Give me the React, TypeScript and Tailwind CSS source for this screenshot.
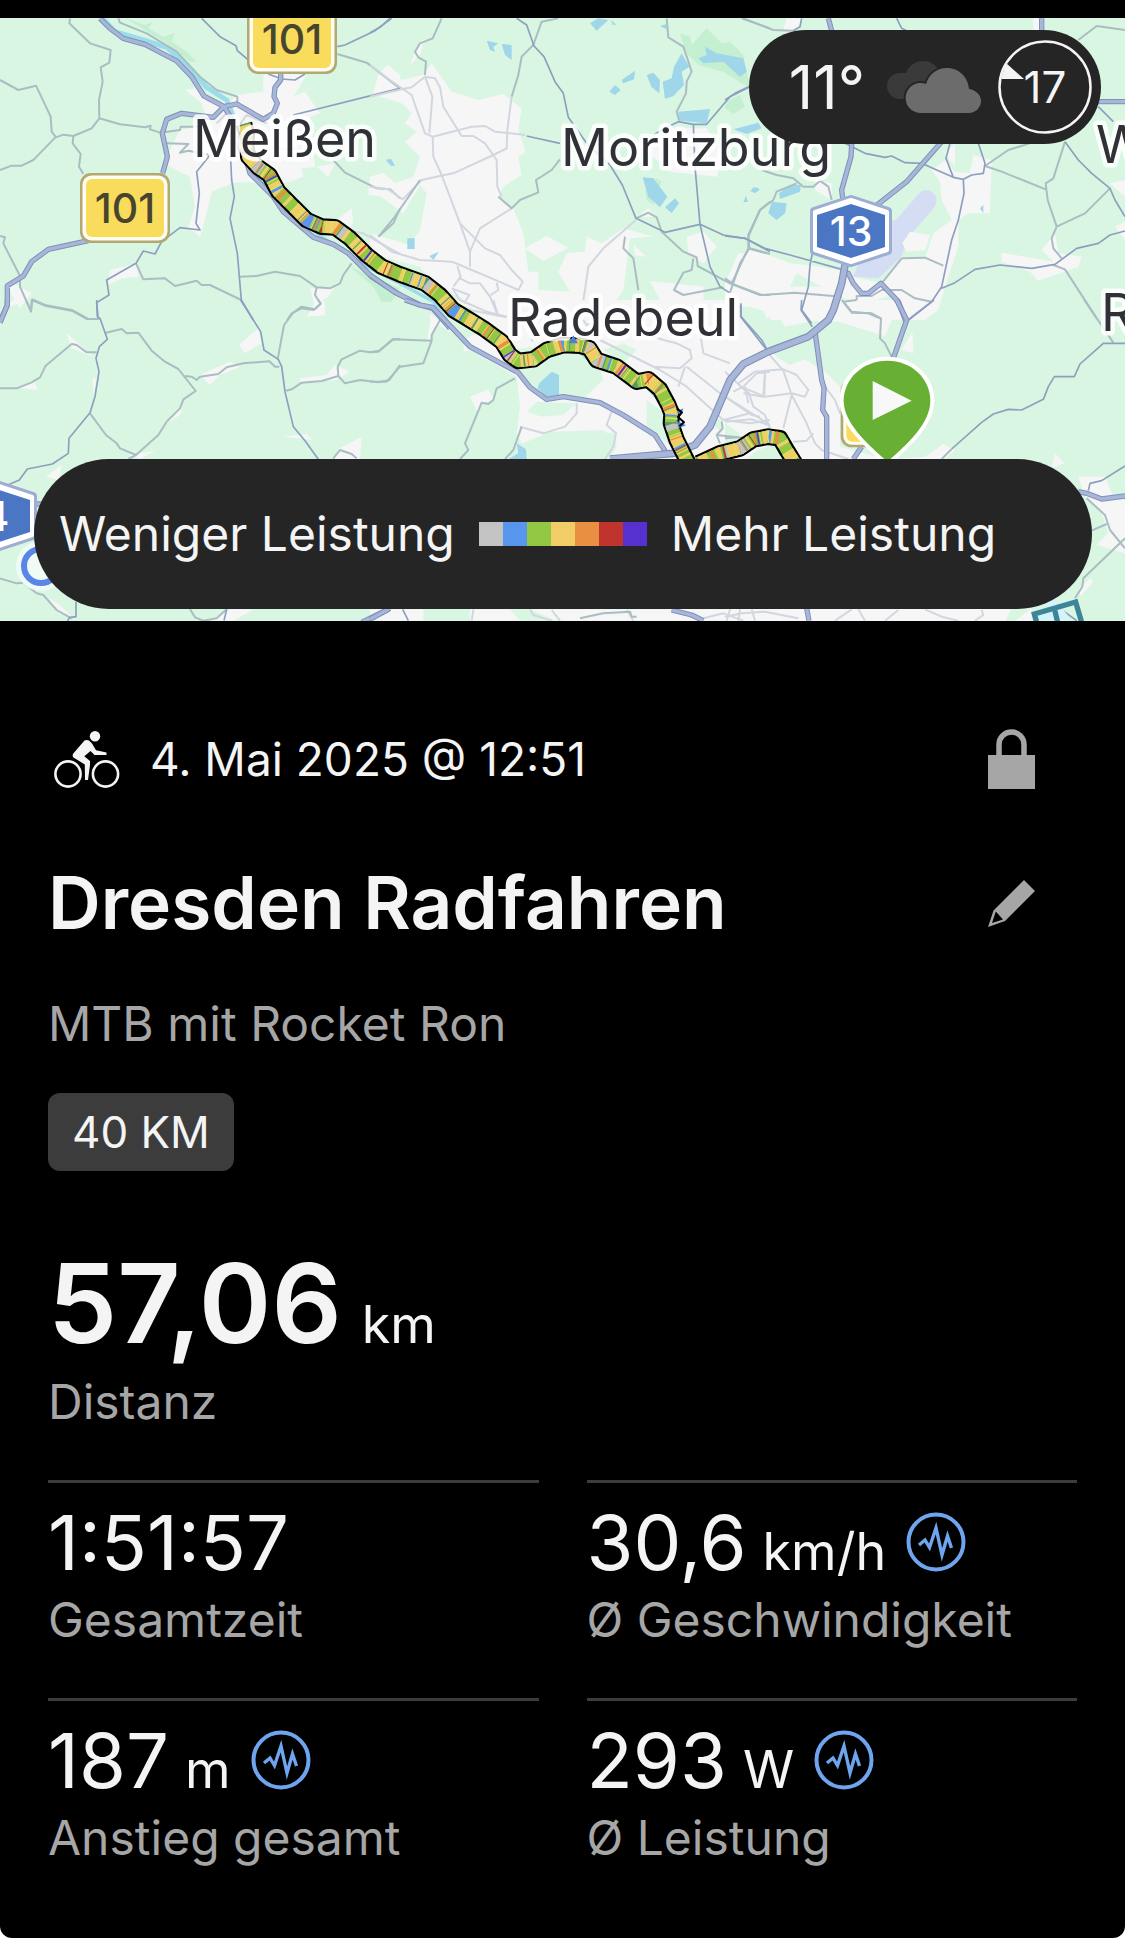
import type { ReactNode } from "react";

const LEGEND = [
  "bg-[#c3c3c3]",
  "bg-[#5796ec]",
  "bg-[#92c843]",
  "bg-[#f1cd66]",
  "bg-[#e98f41]",
  "bg-[#bf342d]",
  "bg-[#5731cf]",
];

/* Map geometry is split into six tiles, each drawn at three units per pixel. */
type TileData = {
  x: number;
  y: number;
  urban: string;
  green?: string;
  forest?: string;
  water?: string;
  gray: string;
  light?: string;
  minor: string;
  major: string;
};

const TILES: TileData[] = [
  {
    x: 0,
    y: 0,
    urban:
      "M555 270L605 262 620 305 690 305 712 285 790 275 790 225 845 220 920 225 880 290 915 275 960 340 930 350 945 500 905 505 910 530 870 545 800 560 750 545 700 548 635 575 620 640 600 712 565 680 585 620 570 530 500 495 510 450 540 390 625 375 605 310Z M1165 195L1200 225V300L1118 285 1135 225Z M950 500L1005 490 985 530Z M1110 530L1150 520 1200 560V625L1165 590 1105 585Z M330 810L410 790 415 830 365 835 325 855Z M40 850L95 880 60 925 20 860Z M1010 660L1055 625 1060 670 1030 700Z M930 865L1005 860 985 890 960 905 975 945 920 950 945 920Z M1120 705L1200 740V790L1160 750Z",
    forest:
      "M375 55L435 75 460 65 445 85 490 110 525 98 515 125 560 155 590 185 570 185 500 130Z M1050 800L1200 865 1175 905 1145 905 1120 860Z",
    water: "M1158 480l15-4 12 22-18-6z",
    gray: "M210 55L208 70 270 130 332 150 328 188 302 202 308 245 297 300 298 355 275 385 220 408 190 404 168 412 155 395 152 350 108 257 55 270 0 240 M168 410L110 470 100 480 65 497 35 497 0 510 M220 408L218 430 242 462 237 500 250 522 M298 355L360 373 435 382 452 377 450 388 480 398 540 390 542 380 600 380 M355 55L360 68 440 100 530 155 600 230 650 270 712 290 712 320 M500 430L565 432 540 458 565 452 630 465 M1012 162L1100 188 1200 265 M1000 480L1035 518 1130 565 1170 568 1200 595 M0 708L15 712 10 730 60 828 60 860 93 935 97 898 135 915 215 930 265 957 290 957 M408 790L430 838 495 835 525 858 590 842 605 855 630 855 724 900 M720 830L770 828 825 815 900 828 950 862 990 865 1020 850 1030 825 1055 790 M950 862L945 885 962 912 940 930 905 925 875 940 862 960 M1200 625L1180 670 1135 710",
    light: "M1035 690L1090 700 1160 740 1200 762 M700 400L740 345 800 370 M650 370L690 330 M800 445L930 448",
    minor:
      "M605 55L660 110 708 137 712 152 745 180 M1175 55L1125 92 1035 135 1012 140 M805 222L845 237 885 240 915 222 M880 345L1200 265 M630 465L590 515 598 580 588 670 600 690 540 683 485 725 465 762 430 753 408 790 320 840 327 885 290 908 295 960 M692 480L695 540 703 590 690 655 712 760 724 900 760 960",
    major:
      "M300 55L330 85 370 115 435 133 530 183 575 230 612 288 672 320 710 312 790 358 820 340 832 310 822 290 825 262 842 240V215 M672 320L640 352 545 340 500 358 487 400 502 470 488 520 M672 320L700 365 M735 470L750 520 820 590 850 635 940 712 1000 733 1045 760 1115 830 1200 885 M265 722L145 748 95 785 70 828 22 857 22 915 0 965",
  },
  {
    x: 370,
    y: 0,
    urban:
      "M15 285L30 220 50 195 95 240 160 225 185 190 245 275 325 300 400 282 455 325 445 390 467 455 445 470 455 525 400 560 385 590 430 625 460 700 475 815 505 815 505 870 600 875 565 815 590 760 645 755 650 710 695 730 760 685 850 710 780 715 760 870 700 960 380 960 180 840 150 800 0 760 0 700 120 735 150 690 170 580 150 555 100 640 0 565 0 530 40 520 60 555 130 530 150 470 105 425 140 395 105 370 125 340 95 310Z M530 708L595 743 520 783 465 745Z M120 195L140 140 165 115 150 165Z M840 843L1000 860V900H870Z M955 760L950 710 1000 695 1040 740 1000 790Z M1110 790L1140 750 1200 760V900L1090 880Z M900 385L1010 385 1060 480 1040 530 900 515 800 430Z M800 650L835 625 860 652 830 650Z M790 735L830 770 795 765Z",
    forest:
      "M930 100L960 110 965 135 1010 85 1055 130 1080 125 1120 165 1140 265 1060 215 985 195 950 160Z M1070 305L1110 285 1125 320 1090 342 1065 325Z M825 570L830 600 850 615 855 600 875 545 860 535Z",
    water:
      "M685 55L715 60 680 92 660 70Z M722 60l18 14h-12z M350 122L385 130 370 140 375 155 360 150Z M395 132L425 135V180L405 165Z M795 212L792 238 760 250 755 240Z M735 255L752 270 735 285 718 275Z M830 225L850 218 870 240 868 280 845 262Z M935 160L958 200 935 215 942 255 910 288 885 297 878 245 905 235 912 200Z M985 175L1010 165 1005 140 1040 160 1120 175 1130 215 1110 230 1060 185 1000 190Z M925 335L1020 327 1010 370 930 362Z M1090 388L1165 368 1175 385 1130 402Z M818 532L850 535 892 590 870 622 835 590Z M915 595L927 610 905 640 885 622Z M1150 562l20 5-15 12-12-6z M1128 588l6 18h-14z M112 715h22v32h-22z M178 768L207 755 190 780Z M50 478L75 498 62 497Z M870 78l20-6-2 16z",
    gray: "M215 55L188 115 150 130 135 155 145 172 168 185 165 225 M565 55L515 65 490 135 455 170 445 225 425 290 M890 55L895 112 940 140 965 215 950 245 948 280 920 335 928 362 M1115 55L1200 85 M570 478L545 510 498 540 505 577 450 600 425 625 385 590 M798 655L835 638 860 652 875 695 940 755 980 772 983 798 1080 850 1170 885 1200 885 M970 775L965 810 940 818 912 870 940 885 1060 862 M1200 605L1170 630 1135 705 1138 745 1110 790 1080 878 M765 710L760 745 790 775 805 870 M75 650L30 705 M150 540L75 650 M1138 745L1200 762",
    light:
      "M0 195L60 240 125 285 165 400 188 410 190 470 215 525 270 670 300 755 300 800 M0 290L95 268 125 262 165 230 195 235 210 262 220 320 275 408 310 408 345 430 380 480 382 560 395 590 M165 230L187 290 178 400 M188 410L305 380 345 378 375 395 465 405 M425 290L412 390 410 445 370 465 255 518 155 540 98 598 55 568 0 560 M425 625L330 685 300 755 M0 705L65 755 150 780 245 785 270 795 400 850 445 870 458 845 425 810 390 765 345 745 270 670 M262 798L272 830 250 860 M245 865L298 885 282 910 M270 835L300 850 330 850 360 890 385 950 M380 848L385 870 362 885 M250 870L270 900 350 935 410 950 M798 660L700 745 655 800 645 870 640 900",
    minor:
      "M440 55L470 75 492 138 522 170 555 245 580 280 595 352 650 430 720 495 757 555 798 655 885 697 990 673 1060 705 1125 715 1200 755 M60 55L30 82 0 98 M470 408L570 430 M885 385L925 365 970 373 1010 373 1080 290 1140 260 M970 373L975 500 990 673 1020 800 1050 860 1078 878 M850 405L885 385",
    major: "M0 825L75 877 150 915 188 925 240 985",
  },
  {
    x: 725,
    y: 0,
    urban:
      "M185 55h45l-15 35h-40z M925 55h20v40h-20z M0 850L40 760 130 765 195 790 250 795 340 810 400 835 470 850 530 770 600 775 625 700 680 660 650 600 645 545 620 510 660 480 690 515 735 520 745 465 800 480 795 640 730 640 700 660 700 740 660 860 640 930 600 960H0Z M830 758L985 785 950 750 990 700 1000 760 1070 770 1060 800 940 842 915 815 830 785Z M1155 550L1200 540V590Z M270 540L320 550 320 600 270 570Z M1170 680L1200 665V720Z M660 460L690 430 690 500Z",
    green: "M195 860L215 820 290 860Z M330 890L380 900 400 960 320 930Z M440 905L500 885 530 940 490 960Z M480 765L530 770 490 820Z",
    water:
      "M162 580L195 555 228 555 225 575 165 597Z M140 605L185 610 180 640 155 660 130 640Z M765 625l10-10v25z M75 572l20-10 8 8-15 8z",
    gray: "M55 55L145 90 205 92 M930 425L850 450 780 498 830 515 962 568 M1020 425L985 535 962 550 968 600 995 680 980 715 985 745 1010 775 M1155 565L1080 640 995 680 M985 795L1020 808 1115 955 M1060 120L1115 78 1200 90 M320 600L310 560 285 542 265 560 235 560 205 535 155 525 110 510 M215 550L155 575 145 600 105 630 70 710 70 745 125 760 M70 745L20 850 M0 835L30 855 110 885 210 878 350 890 M395 900L395 888 440 888 470 870 530 870 570 895 620 905 M530 775L600 773 655 797 M530 775L470 850 M395 900L355 905 380 935 430 940 465 955",
    minor:
      "M230 55L225 80 205 92 M360 430L420 460 480 472 500 468 540 488 590 490 635 510 685 532 715 538 740 525 775 520 780 490 760 430 M675 430L663 475 685 532 M715 538L717 580 700 660 680 720 650 860 620 905 550 960 M650 865L690 848 750 808 825 795 920 805 990 793 1055 745 1120 730 1155 705 1200 693 M0 708L60 715 120 745 195 765 350 808 M262 760L255 795 250 860 230 930 260 970 M1020 425L1060 480 1100 520 1155 565 1170 600 1200 650 M1120 320L1165 365 M515 55L530 85 570 105 M0 300L30 280 75 258",
    major:
      "M310 55L322 100 M380 430L378 470 350 570 355 610 M650 425L545 545 450 620 M950 55V100 M1115 305H1200 M350 815L370 820 385 850 410 880 430 880 468 850 520 905 543 965",
  },
  {
    x: 0,
    y: 300,
    urban:
      "M200 100L235 130 280 172 215 145Z M45 262L105 245 112 270Z M185 495L175 540 138 530Z M775 85L783 130 735 160 717 135Z M600 225L690 185 720 200 660 225 630 255Z M1005 195L1048 215 1010 240 900 247V235L980 225Z M850 410L920 402 935 420Z M1085 410L1080 477H1000L1020 445Z M385 465L465 452 420 477Z M920 50L950 0 975 5 975 42Z M130 885L180 915 220 955 180 940Z M630 962L690 928H760L700 962Z M548 320L540 345 500 370Z M278 235l12 0-10 50z M0 30L90 0 40 0Z M1150 962L1200 928V962Z",
    gray: "M95 0L135 17 215 32 260 57 298 57 M78 0L93 33 95 0 M318 98L365 87 380 100 415 98 455 152 495 185 535 207 587 273 550 298 540 325 500 365 475 405 408 465 385 477 M408 465L360 445 350 430 318 405 270 340 M555 228L575 230 590 240 600 230 655 222 680 202 730 190 808 184 825 200 838 200 M833 178L852 75 880 38 905 20 945 28 962 10 955 0 M290 157L260 157 230 135 215 132 137 197 120 232 95 247 50 265 0 265 M858 272L875 268 905 248 965 243 1015 228 1013 200 1025 178 1080 152 1110 157 1138 152 1178 118 1200 118 M1015 228L1035 250 1080 240 1135 247 1168 240 1200 195 M1000 475L1020 450 1055 462 1070 475 M0 835L50 850 70 848 110 880 130 885 170 930 215 955 M570 928L585 952 610 962 650 955 680 928",
    minor:
      "M290 0L292 50 300 55 322 118 298 140 288 175 297 215 285 290 270 338 207 415 205 460 157 492 82 507 58 540 0 565 M722 0L782 95 792 150 835 178 845 200 855 275 880 380 915 422 955 478 M228 905V950L208 953 202 965 M672 962L680 928",
    major: "M100 612H200 M1085 967L1170 925 M22 0L22 15 0 68",
  },
  {
    x: 370,
    y: 300,
    urban:
      "M180 0H1200V477H715L740 440 735 400 650 392 550 400 455 430 440 400 450 320 440 230 300 150 280 155 285 120 180 60Z M300 290L355 268 372 300 335 310 325 340Z M0 928H160V962H0Z M300 928H1200V962H300Z M170 130L185 40 215 60Z",
    green:
      "M400 150L600 130 690 205 700 240 640 295 530 300 480 262Z M500 305L620 310 580 345 515 350 470 335Z M700 150L760 130 800 150 760 190Z M830 300L900 350 895 430 760 345 720 330 830 380Z M1110 10L1200 40V150L1115 60Z M1010 350L1060 360 1055 400Z M540 395L700 390 735 450 715 477H430L460 430Z M360 80L300 20 180 0 180 40 280 120Z M420 928H480L560 962H450Z",
    water:
      "M508 250L545 215 567 225V285L530 290 502 265Z M415 477L445 460 440 430 468 448 470 477Z M480 115l10 4-2 8z",
    gray: "M0 157L25 155 70 118 185 122 185 105 210 60 M0 245L50 245 90 200 160 190 185 122 M435 235L380 265 370 300 355 312 335 308 285 430 295 450 270 477 M1055 365L1058 385 1040 405 1050 430 M1040 405L1130 415 M630 955L700 940 780 935 785 950 800 950 M455 380L430 450 405 477",
    light:
      "M620 310V340L585 380 520 400 450 380 M725 335L710 375 738 400 730 440 705 477 M620 75L690 120 780 165 870 210 950 260 1060 360 1140 370 1200 360 M800 90L880 120 920 130 960 150 965 175 930 205 850 200 M945 200L925 260 M950 200L1050 280 1130 330 1200 375 M1000 160L990 95 M1000 160L1080 190 M1060 360L1140 340 M1200 215L1160 220 1120 260 1090 275 M1125 260L1135 310 M1120 280L1180 290 1185 220 M640 60L650 75 665 70 M200 0L250 20 410 52 M370 0L385 48 M310 928L305 962 M480 928L490 945 545 962 M545 930L570 962 M770 930L790 962 M1000 955L1060 940 1120 962 M1080 928L1070 962",
    minor: "M1112 15V50L1155 105 1190 150 M98 928L115 962",
    major:
      "M105 0L150 15 188 22 300 140 445 218 480 262 530 298 580 290 690 308 760 345 855 405 890 460 M0 958L55 928 M905 930L965 945 1000 962",
  },
  {
    x: 725,
    y: 300,
    urban:
      "M0 0H620L590 40 560 60 500 60 480 108 340 65 265 62 180 80 155 38 125 55 110 20 50 20 40 90 0 90Z M562 95L565 160 530 150Z M0 150L50 190 140 155 160 175 195 195 240 178 300 215 345 260V477H0Z M510 477L600 470 655 432 690 450 660 477Z M990 460L1018 490 980 505Z M1060 530L1140 530 1160 580 1200 600V760L1115 735 1150 700 1130 640 1080 590Z M1060 870L1095 835 1105 845 1065 890Z M0 925H920V963H0Z M345 440L480 477H345Z",
    green: "M0 370L45 400 30 430 0 440Z M100 450L150 430 170 477H60Z M860 925H920L870 963H840Z",
    gray: "M350 0L380 38 440 40 468 55 465 115 480 130 500 170 M1078 0L1165 128 M1085 595L1140 645 1155 690 1200 745 M1145 672L1100 692 M1200 715L1075 835 1072 860 1050 895 M680 447L650 477 M0 415L40 412",
    light:
      "M125 155L175 212 200 285 245 370 270 430 290 450 370 477 M0 215L70 280 M40 250L90 215 175 208 215 225 250 270 240 290 200 280 120 290 60 265 M120 215L118 285 M70 275L85 320 120 345 135 385 M0 290L80 345 105 350 M130 375L80 358 0 365 M200 285L175 385 M205 425L245 422 265 400 M300 260L330 300 345 340 M0 950L50 940 120 935 220 955 M45 928L40 962 M80 928L90 962 M330 962L380 928 M400 928L420 962 M480 962L520 930 M600 928L650 950 700 962 M770 930L775 945 750 962",
    minor:
      "M230 0L228 30 262 80 M627 0L550 60 M48 10V50L110 120 128 152 M1200 130H1135L1065 192 1048 230 988 230 970 260 955 298 890 330 850 328 805 342 770 367 680 447 M1090 572L1095 550 1130 542 1200 498 M970 900L1055 962",
    major:
      "M270 95L290 240 297 265 293 330 305 350V477 M515 0L545 60 505 175 M385 477L410 440 M1060 575L1085 580 1130 597 1200 588 M245 925L252 962",
  },
];

const ROUTES = [
  "M732 372L740 400 738 440 745 470 775 502 808 525 835 575 870 610 920 660 965 680 1005 682 1050 715 1100 765 1145 800 1200 823 1225 832 1275 850 1320 885 1360 930 1385 945 1450 985 1505 1025 1530 1065 1555 1083 1600 1078 1640 1050 1690 1035 1740 1037 1768 1045 1790 1080 1850 1100 1910 1145 1945 1138 1980 1168 2005 1215 2015 1240 2013 1270 2030 1320 2065 1390",
  "M2095 1390L2160 1360 2220 1345 2260 1318 2305 1310 2340 1315 2360 1350 2385 1390",
];

const MOTORWAY =
  "M2537 785L2525 850 2500 930 2485 960 2425 1010 2305 1055 2230 1092 2190 1140 2130 1280 2085 1335 2020 1360 1930 1368 1830 1377";

/* Stripe layers that colour the route by power output. */
const STRIPES = [
  { color: "#f1cd66", dash: "34 30 12 22 46 18 8 40", offset: 0 },
  { color: "#5796ec", dash: "9 120 22 14 7 260 5 90", offset: 300 },
  { color: "#c3c3c3", dash: "18 240 9 36 24 310", offset: 170 },
  { color: "#e98f41", dash: "6 58 10 90 4 37", offset: 20 },
  { color: "#4f9a72", dash: "3 41 5 77 3 64", offset: 45 },
  { color: "#bf342d", dash: "3 140 5 88 3 230", offset: 60 },
  { color: "#d9e46a", dash: "3 19 4 47 3 31", offset: 12 },
  { color: "#5731cf", dash: "5 520 4 380", offset: 330 },
];

const SCALE = 1 / 3;

function Tiles({ children }: { children: (tile: TileData) => ReactNode }) {
  return (
    <>
      {TILES.map((tile) => (
        <g key={`${tile.x}-${tile.y}`} transform={`translate(${tile.x} ${tile.y}) scale(${SCALE})`}>
          {children(tile)}
        </g>
      ))}
    </>
  );
}

function Place({ x, y, children }: { x: number; y: number; children: string }) {
  return (
    <text
      x={x}
      y={y}
      fontSize="52"
      fill="#303136"
      stroke="#ffffff"
      strokeOpacity="0.85"
      strokeWidth="9"
      strokeLinejoin="round"
      paintOrder="stroke"
    >
      {children}
    </text>
  );
}

function FederalRoad({ x, y }: { x: number; y: number }) {
  return (
    <g transform={`translate(${x} ${y})`}>
      <rect width="90" height="70" rx="11" fill="#b3a772" />
      <rect x="2.5" y="2.5" width="85" height="65" rx="9" fill="#fffdf2" />
      <rect x="6" y="6" width="78" height="58" rx="6" fill="#f9dc5c" />
      <text x="45" y="50" fontSize="41" fontWeight="500" textAnchor="middle" fill="#48452f">
        101
      </text>
    </g>
  );
}

function Motorway({ x, y, label }: { x: number; y: number; label: string }) {
  return (
    <g transform={`translate(${x} ${y})`} strokeLinejoin="round">
      <path d="M0-32L37-20V20L0 32-37 20V-20Z" fill="#9eaed3" stroke="#9eaed3" strokeWidth="8" />
      <path d="M0-31L36-19V19L0 31-36 19V-19Z" fill="#fff" stroke="#fff" strokeWidth="4" />
      <path d="M0-27L34-16V16L0 27-34 16V-16Z" fill="#4a76c4" />
      <text y="15" fontSize="41" fontWeight="500" textAnchor="middle" fill="#fff">
        {label}
      </text>
    </g>
  );
}

function RouteMap() {
  return (
    <svg
      viewBox="0 18 1125 603"
      className="block w-full bg-[#d9f6e3]"
      role="img"
      aria-label="Karte der Route von Dresden nach Meißen"
    >
      <Tiles>
        {(t) => (
          <>
            <path d={t.urban} fill="#f6f6f7" />
            {t.green && <path d={t.green} fill="#d9f6e3" />}
            {t.forest && <path d={t.forest} fill="#c5efd1" />}
            {t.water && <path d={t.water} fill="#9fd6ea" />}
          </>
        )}
      </Tiles>
      <g transform={`scale(${SCALE})`} fill="none" stroke="#9bdcea" strokeLinejoin="round">
        <path d="M308 55L345 95 430 120 500 142 555 190 620 262 680 300 698 345" strokeWidth="15" />
        <path
          d="M745 500L850 620 950 700 1100 800 1200 850 1300 905 1340 960 M1555 1095L1600 1080 M1740 1055L1790 1100 M1940 1160L1990 1215 2005 1270"
          strokeWidth="10"
        />
      </g>
      <g transform={`translate(725 0) scale(${SCALE})`}>
        <path d="M604 602L520 700" stroke="#d5ddf4" strokeWidth="62" strokeLinecap="round" />
        <path d="M495 665L570 640 530 770 460 835 385 830 400 790 480 750Z" fill="#d5ddf4" />
        <path d="M555 695L615 705 600 750 545 755 532 730Z" fill="#f6f6f7" />
      </g>
      <Tiles>
        {(t) => (
          <g fill="none" strokeLinejoin="round">
            {t.light && <path d={t.light} stroke="#d2d7df" strokeWidth="6" />}
            <path d={t.gray} stroke="#aabdc2" strokeWidth="6" />
            <path d={t.minor} stroke="#8d9fbe" strokeWidth="5" />
          </g>
        )}
      </Tiles>
      <Tiles>
        {(t) => (
          <g fill="none" strokeLinejoin="round">
            <path d={t.major} stroke="#7f90ba" strokeWidth="16" />
            <path d={t.major} stroke="#a8b7d8" strokeWidth="10" />
          </g>
        )}
      </Tiles>
      <g transform={`scale(${SCALE})`} fill="none" strokeLinejoin="round">
        <path d={MOTORWAY} stroke="#7f90ba" strokeWidth="23" />
        <path d={MOTORWAY} stroke="#a8b7d8" strokeWidth="16" />
      </g>
      <g transform={`scale(${SCALE})`} fill="none" strokeLinejoin="round">
        <path d={ROUTES[1]} stroke="#000" strokeWidth="50" />
        <path d={ROUTES[0]} stroke="#000" strokeWidth="50" />
        {ROUTES.map((d) => (
          <g key={d}>
            <path d={d} stroke="#92c843" strokeWidth="37" />
            {STRIPES.map((s) => (
              <path
                key={s.color}
                d={d}
                stroke={s.color}
                strokeWidth="37"
                strokeDasharray={s.dash}
                strokeDashoffset={s.offset}
              />
            ))}
          </g>
        ))}
        <path d="M1706 1030l14-24 14 24z M2030 1235l20-10-8 22z M2030 1262l28 14-22 8z" fill="#4a80d8" />
        <path d="M2030 1225l16 12-12 14 18 16-14 12" stroke="#000" strokeWidth="6" />
      </g>

      <Place x={193} y={157}>Meißen</Place>
      <Place x={561} y={166}>Moritzburg</Place>
      <Place x={508} y={336}>Radebeul</Place>
      <Place x={1096} y={163}>W</Place>
      <Place x={1101} y={331}>R</Place>

      <FederalRoad x={247} y={4} />
      <FederalRoad x={80} y={173} />
      <Motorway x={851} y={231} label="13" />
      <Motorway x={-4} y={516} label="4" />

      <circle cx="41" cy="566" r="25" fill="#f0fbf6" />
      <circle cx="41" cy="566" r="17" fill="none" stroke="#5a86e8" strokeWidth="6" />

      <g transform={`translate(725 300) scale(${SCALE})`}>
        <rect x="347" y="240" width="150" height="202" rx="32" fill="#b3a772" />
        <rect x="355" y="248" width="134" height="186" rx="26" fill="#fffdf2" />
        <rect x="364" y="257" width="116" height="168" rx="18" fill="#f9dc5c" />
        <path
          d="M487 182C414 182 356 236 356 302 356 368 425 430 487 485 550 430 616 368 616 302 616 236 560 182 487 182Z"
          fill="#68b034"
          stroke="#fff"
          strokeWidth="24"
          paintOrder="stroke"
        />
        <path d="M443 243L560 302 443 360Z" fill="#f8f8f8" />
        <path d="M960 930L965 890 990 895 1040 962H935Z" fill="#d5f3fa" />
        <path d="M935 967L928 942 1052 906 1070 967 M988 925L998 967" fill="none" stroke="#3d8699" strokeWidth="16" />
      </g>
    </svg>
  );
}

function CloudIcon() {
  return (
    <svg viewBox="0 0 94 52" className="h-[52px] w-[94px]" aria-label="Bewölkt" role="img">
      <g fill="#3a3a3a">
        <circle cx="13" cy="25" r="13" />
        <circle cx="36" cy="18" r="18" />
        <path d="M13 12H45V38H13Z" />
      </g>
      <g fill="#6c6c6c" stroke="#252525" strokeWidth="4" paintOrder="stroke">
        <path d="M33 52A15 15 0 1 1 39 23C42 13 50 7 60 7 72 7 81 16 82 28 89 29 94 34 94 40 94 47 88 52 82 52Z" />
      </g>
    </svg>
  );
}

function WeatherPill() {
  return (
    <div className="absolute top-3 right-6 flex h-[114px] items-center rounded-full bg-[#252525] pr-2 pl-10 text-[#f4f4f4]">
      <span className="text-[60px] leading-none">11°</span>
      <span className="ml-[22px]">
        <CloudIcon />
      </span>
      <span className="relative ml-4 flex size-[96px] items-center justify-center">
        <svg viewBox="0 0 96 96" className="absolute inset-0 size-full" aria-hidden="true">
          <circle cx="48" cy="48" r="45.5" fill="none" stroke="#f4f4f4" strokeWidth="2.5" />
          <path d="M9 24L27 40H4Z" fill="#f4f4f4" />
        </svg>
        <span className="text-[44px] leading-none">17</span>
      </span>
    </div>
  );
}

function LegendPill() {
  return (
    <div className="absolute right-[33px] bottom-3 left-[34px] flex h-[150px] items-center gap-6 rounded-full bg-[#252525] pl-[25px] text-[48px] leading-none whitespace-nowrap text-[#f4f4f4]">
      <span>Weniger Leistung</span>
      <span className="flex" aria-hidden="true">
        {LEGEND.map((c) => (
          <span key={c} className={`size-6 ${c}`} />
        ))}
      </span>
      <span>Mehr Leistung</span>
    </div>
  );
}

function CyclistIcon() {
  return (
    <svg viewBox="0 0 66 57" className="h-[57px] w-[66px]" aria-hidden="true">
      <g fill="none" stroke="#f4f4f4" strokeWidth="2.6">
        <circle cx="14" cy="43" r="12.6" />
        <circle cx="51.5" cy="43" r="12.6" />
      </g>
      <circle cx="41" cy="5.3" r="5.2" fill="#f4f4f4" />
      <path
        d="M30.500 9.500C32 8.600 34 8.800 35.300 9.800L38 12.400 42 19.300 52.500 21.400V24H40.500L36.500 20 30.300 25.200 36 30V34L34 49H31L30.800 33.500 19.500 26.500C18.300 25.500 18.400 23.500 19.500 22.200Z"
        fill="#f4f4f4"
      />
    </svg>
  );
}

function LockIcon() {
  return (
    <svg viewBox="0 0 47 60" className="h-[60px] w-[47px]" aria-hidden="true">
      <path d="M11 30V15.500A12.500 12.500 0 0 1 36 15.500V30" fill="none" stroke="#a6a6a6" strokeWidth="5.5" />
      <path d="M0 26H47V60H0Z" fill="#a6a6a6" />
    </svg>
  );
}

function PencilIcon() {
  return (
    <svg viewBox="0 0 47 47" className="size-[47px]" aria-hidden="true">
      <path d="M36 0L47 11 17 41 0 47 5.500 30.500Z M7.800 31.500L4 43 15 39.500Z" fill="#a6a6a6" fillRule="evenodd" />
    </svg>
  );
}

function AnalysisButton({ label }: { label: string }) {
  return (
    <button type="button" aria-label={label} className="size-[60px] cursor-pointer">
      <svg viewBox="0 0 60 60" className="size-full" fill="none" stroke="#6ea5ee" aria-hidden="true">
        <circle cx="30" cy="30" r="27.500" strokeWidth="4" />
        <path d="M13 33L19 28 23.500 35.500 30 16 36 43 41.500 24 45.500 36" strokeWidth="3.400" strokeMiterlimit="8" />
      </svg>
    </button>
  );
}

type Stat = { value: string; unit?: string; label: string; analysis?: boolean };

const STATS: Stat[] = [
  { value: "1:51:57", label: "Gesamtzeit" },
  { value: "30,6", unit: "km/h", label: "Ø Geschwindigkeit", analysis: true },
  { value: "187", unit: "m", label: "Anstieg gesamt", analysis: true },
  { value: "293", unit: "W", label: "Ø Leistung", analysis: true },
];

function StatCell({ value, unit, label, analysis }: Stat) {
  return (
    <div className="flex flex-col gap-1.5 border-t-3 border-[#3c3c3c] pt-[17px] pb-12">
      <dd className="order-1 flex items-center gap-5">
        <span className="flex items-baseline gap-4">
          <span className="text-[76px] leading-[84px]">{value}</span>
          {unit && <span className="text-[52px] leading-none">{unit}</span>}
        </span>
        {analysis && <AnalysisButton label={`${label} analysieren`} />}
      </dd>
      <dt className="order-2 text-[48px] leading-[60px] text-[#a6a6a6]">{label}</dt>
    </div>
  );
}

export default function App() {
  return (
    <div className="bg-white font-['Inter',sans-serif]">
      <div className="min-h-screen overflow-hidden rounded-b-xl bg-black text-[#f4f4f4]">
        <header className="relative pt-[18px]">
          <RouteMap />
          <div className="absolute inset-x-0 top-[18px] bottom-0">
            <WeatherPill />
            <LegendPill />
          </div>
        </header>

        <main className="px-12 pt-[108px] pb-5">
          <div className="flex h-[60px] items-center">
            <div className="flex flex-1 items-center gap-[30px] pl-1.5">
              <CyclistIcon />
              <time dateTime="2025-05-04T12:51" className="text-[46px] leading-[60px]">
                4. Mai 2025 @ 12:51
              </time>
            </div>
            <button type="button" aria-label="Sichtbarkeit" className="mr-9 flex size-[60px] items-center justify-center">
              <LockIcon />
            </button>
          </div>

          <div className="mt-[68px] flex items-center">
            <h1 className="flex-1 text-[73px] leading-[92px] font-semibold">Dresden Radfahren</h1>
            <button type="button" aria-label="Bearbeiten" className="mr-9 flex size-[60px] items-center justify-center">
              <PencilIcon />
            </button>
          </div>

          <p className="mt-[45px] text-[48px] leading-[60px] text-[#a6a6a6]">MTB mit Rocket Ron</p>

          <span className="mt-[39px] inline-flex h-[78px] items-center rounded-xl bg-[#3c3c3c] px-6 text-[44px]">
            40 KM
          </span>

          <dl className="mt-[77px]">
            <div className="flex flex-col gap-3.5 pb-12">
              <dd className="order-1 flex items-baseline gap-5">
                <span className="text-[110px] leading-[110px] font-semibold">57,06</span>
                <span className="text-[52px] leading-none">km</span>
              </dd>
              <dt className="order-2 text-[48px] leading-[60px] text-[#a6a6a6]">Distanz</dt>
            </div>
            <div className="grid grid-cols-2 gap-x-12">
              {STATS.map((s) => (
                <StatCell key={s.label} {...s} />
              ))}
            </div>
          </dl>
        </main>
      </div>
    </div>
  );
}
